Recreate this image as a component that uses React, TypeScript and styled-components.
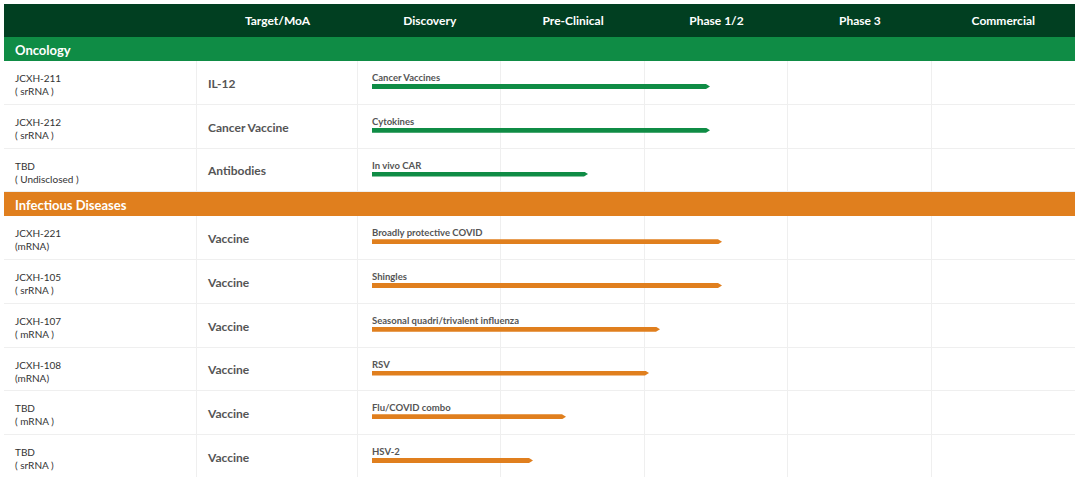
import React from "react";
import styled, { createGlobalStyle } from "styled-components";

const Global = createGlobalStyle`
  html, body { margin: 0; padding: 0; background: #fff; }
  body { font-family: Lato, "Open Sans", sans-serif; }
  * { box-sizing: border-box; }
`;

const COLS = "193px 161px repeat(5, 1fr)";

const Page = styled.div`
  padding: 4px 5px 0 4px;
  width: 1080px;
  height: 477px;
  overflow: hidden;
`;

const Table = styled.div`
  display: flex;
  flex-direction: column;
`;

const HeaderRow = styled.div`
  display: grid;
  grid-template-columns: ${COLS};
  height: 33px;
  background: #013f21;
  color: #fff;
  align-items: center;
`;

const HeaderCell = styled.div`
  text-align: center;
  font-size: 12px;
  font-weight: 700;
`;

const Band = styled.div<{ $color: string }>`
  height: 24px;
  flex-shrink: 0;
  background: ${(p) => p.$color};
  color: #fff;
  font-size: 13px;
  font-weight: 700;
  display: flex;
  align-items: center;
  padding: 1px 0 0 11px;
`;

const Row = styled.div`
  display: grid;
  grid-template-columns: ${COLS};
  height: 43.75px;
  flex-shrink: 0;
  border-bottom: 1px solid #efefef;
`;

const NameCell = styled.div`
  grid-row: 1;
  grid-column: 1;
  padding: 11px 0 0 11px;
  font-size: 10px;
  line-height: 13px;
  color: #333;
  border-right: 1px solid #efefef;
`;

const TargetCell = styled.div`
  grid-row: 1;
  grid-column: 2;
  display: flex;
  align-items: center;
  padding: 2px 0 0 11px;
  font-size: 12px;
  font-weight: 700;
  color: #555;
  border-right: 1px solid #efefef;
`;

const PhaseCell = styled.div<{ $col: number }>`
  grid-row: 1;
  grid-column: ${(p) => p.$col};
  border-right: ${(p) => (p.$col < 7 ? "1px solid #efefef" : "none")};
`;

const Track = styled.div`
  grid-row: 1;
  grid-column: 3 / 8;
  padding: 11px 0 0 14px;
  display: flex;
  flex-direction: column;
  align-items: flex-start;
  z-index: 1;
`;

const BarLabel = styled.div`
  font-size: 9.5px;
  line-height: 12px;
  font-weight: 700;
  color: #555;
`;

const Bar = styled.div<{ $color: string }>`
  height: 5px;
  background: ${(p) => p.$color};
  clip-path: polygon(0 0, calc(100% - 4px) 0, 100% 50%, calc(100% - 4px) 100%, 0 100%);
`;

type Item = { name: string; sub: string; target: string; label: string; w: number };

const GREEN = "#0f8c45";
const ORANGE = "#e07f1e";

const oncology: Item[] = [
  { name: "JCXH-211", sub: "( srRNA )", target: "IL-12", label: "Cancer Vaccines", w: 338 },
  { name: "JCXH-212", sub: "( srRNA )", target: "Cancer Vaccine", label: "Cytokines", w: 338 },
  { name: "TBD", sub: "( Undisclosed )", target: "Antibodies", label: "In vivo CAR", w: 216 },
];

const infectious: Item[] = [
  { name: "JCXH-221", sub: "(mRNA)", target: "Vaccine", label: "Broadly protective COVID", w: 350 },
  { name: "JCXH-105", sub: "( srRNA )", target: "Vaccine", label: "Shingles", w: 350 },
  { name: "JCXH-107", sub: "( mRNA )", target: "Vaccine", label: "Seasonal quadri/trivalent influenza", w: 288 },
  { name: "JCXH-108", sub: "(mRNA)", target: "Vaccine", label: "RSV", w: 277 },
  { name: "TBD", sub: "( mRNA )", target: "Vaccine", label: "Flu/COVID combo", w: 194 },
  { name: "TBD", sub: "( srRNA )", target: "Vaccine", label: "HSV-2", w: 161 },
];

const headers = ["", "Target/MoA", "Discovery", "Pre-Clinical", "Phase 1/2", "Phase 3", "Commercial"];

function PipelineRow({ item, color }: { item: Item; color: string }) {
  return (
    <Row>
      <NameCell>
        {item.name}
        <br />
        {item.sub}
      </NameCell>
      <TargetCell>{item.target}</TargetCell>
      {[3, 4, 5, 6, 7].map((c) => (
        <PhaseCell key={c} $col={c} />
      ))}
      <Track>
        <BarLabel>{item.label}</BarLabel>
        <Bar $color={color} style={{ width: item.w }} />
      </Track>
    </Row>
  );
}

export default function App() {
  return (
    <>
      <Global />
      <Page>
        <Table>
          <HeaderRow>
            {headers.map((h, i) => (
              <HeaderCell key={i}>{h}</HeaderCell>
            ))}
          </HeaderRow>
          <Band $color={GREEN}>Oncology</Band>
          {oncology.map((it, i) => (
            <PipelineRow key={i} item={it} color={GREEN} />
          ))}
          <Band $color={ORANGE}>Infectious Diseases</Band>
          {infectious.map((it, i) => (
            <PipelineRow key={i} item={it} color={ORANGE} />
          ))}
        </Table>
      </Page>
    </>
  );
}
